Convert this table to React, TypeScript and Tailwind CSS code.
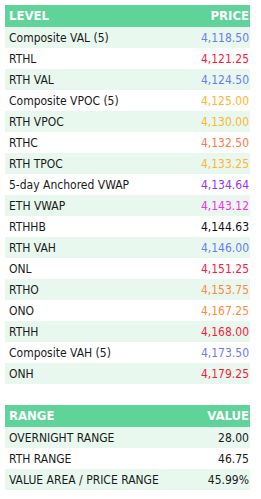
import React from 'react';

const levels: { name: string; price: string; color: string }[] = [
  { name: 'Composite VAL (5)', price: '4,118.50', color: 'text-[#6b7cf7]' },
  { name: 'RTHL', price: '4,121.25', color: 'text-[#ff1a3c]' },
  { name: 'RTH VAL', price: '4,124.50', color: 'text-[#6b7cf7]' },
  { name: 'Composite VPOC (5)', price: '4,125.00', color: 'text-[#fdb62f]' },
  { name: 'RTH VPOC', price: '4,130.00', color: 'text-[#fdb62f]' },
  { name: 'RTHC', price: '4,132.50', color: 'text-[#ff7a45]' },
  { name: 'RTH TPOC', price: '4,133.25', color: 'text-[#fdb62f]' },
  { name: '5-day Anchored VWAP', price: '4,134.64', color: 'text-[#9a32f5]' },
  { name: 'ETH VWAP', price: '4,143.12', color: 'text-[#ff2cf0]' },
  { name: 'RTHHB', price: '4,144.63', color: 'text-[#111111]' },
  { name: 'RTH VAH', price: '4,146.00', color: 'text-[#6b7cf7]' },
  { name: 'ONL', price: '4,151.25', color: 'text-[#ff1a3c]' },
  { name: 'RTHO', price: '4,153.75', color: 'text-[#ff8a3d]' },
  { name: 'ONO', price: '4,167.25', color: 'text-[#ff8a3d]' },
  { name: 'RTHH', price: '4,168.00', color: 'text-[#ff1a3c]' },
  { name: 'Composite VAH (5)', price: '4,173.50', color: 'text-[#6b7cf7]' },
  { name: 'ONH', price: '4,179.25', color: 'text-[#ff1a3c]' },
];

const ranges = [
  { name: 'OVERNIGHT RANGE', value: '28.00' },
  { name: 'RTH RANGE', value: '46.75' },
  { name: 'VALUE AREA / PRICE RANGE', value: '45.99%' },
];

const font = { fontFamily: '"DejaVu Sans Condensed", "Liberation Sans Narrow", sans-serif' };

const Table: React.FC<{ left: string; right: string; rows: { name: string; value: string; color?: string }[] }> = ({ left, right, rows }) => (
  <div className="w-[245px]">
    <div className="flex h-[22px] items-center justify-between bg-[#5fd399] pl-[4px] pr-[1px] text-[13px] font-bold text-white">
      <span>{left}</span>
      <span>{right}</span>
    </div>
    {rows.map((r, i) => (
      <div
        key={i}
        className={`flex h-[21px] items-center justify-between pl-[4px] pr-[1px] text-[12px] ${i % 2 === 0 ? 'bg-[#e8f8ee]' : 'bg-white'}`}
      >
        <span className="text-[#1a1a1a]">{r.name}</span>
        <span className={r.color ?? 'text-[#1a1a1a]'}>{r.value}</span>
      </div>
    ))}
  </div>
);

const App: React.FC = () => {
  return (
    <div className="min-h-screen bg-white pl-[5px] pt-[5px]" style={font}>
      <Table left="LEVEL" right="PRICE" rows={levels.map((l) => ({ name: l.name, value: l.price, color: l.color }))} />
      <div className="h-[21px]" />
      <Table left="RANGE" right="VALUE" rows={ranges} />
    </div>
  );
};

export default App;
